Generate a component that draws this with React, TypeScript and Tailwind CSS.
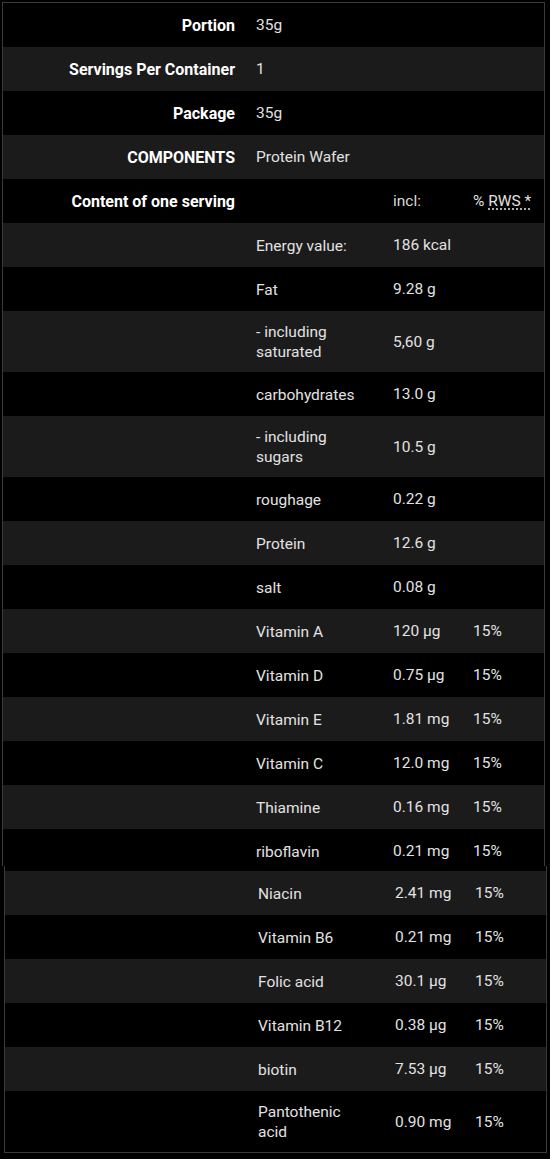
import React from 'react';

type Row = {
  name: string[];
  value: string;
  pct?: string;
  tall?: boolean;
};

const info = [
  { label: 'Portion', value: '35g' },
  { label: 'Servings Per Container', value: '1' },
  { label: 'Package', value: '35g' },
  { label: 'COMPONENTS', value: 'Protein Wafer' },
];

const upper: Row[] = [
  { name: ['Energy value:'], value: '186 kcal' },
  { name: ['Fat'], value: '9.28 g' },
  { name: ['- including', 'saturated'], value: '5,60 g', tall: true },
  { name: ['carbohydrates'], value: '13.0 g' },
  { name: ['- including', 'sugars'], value: '10.5 g', tall: true },
  { name: ['roughage'], value: '0.22 g' },
  { name: ['Protein'], value: '12.6 g' },
  { name: ['salt'], value: '0.08 g' },
  { name: ['Vitamin A'], value: '120 µg', pct: '15%' },
  { name: ['Vitamin D'], value: '0.75 µg', pct: '15%' },
  { name: ['Vitamin E'], value: '1.81 mg', pct: '15%' },
  { name: ['Vitamin C'], value: '12.0 mg', pct: '15%' },
  { name: ['Thiamine'], value: '0.16 mg', pct: '15%' },
  { name: ['riboflavin'], value: '0.21 mg', pct: '15%' },
];

const lower: Row[] = [
  { name: ['Niacin'], value: '2.41 mg', pct: '15%' },
  { name: ['Vitamin B6'], value: '0.21 mg', pct: '15%' },
  { name: ['Folic acid'], value: '30.1 µg', pct: '15%' },
  { name: ['Vitamin B12'], value: '0.38 µg', pct: '15%' },
  { name: ['biotin'], value: '7.53 µg', pct: '15%' },
  { name: ['Pantothenic', 'acid'], value: '0.90 mg', pct: '15%', tall: true },
];

const grid = 'grid grid-cols-[242px_137px_80px_1fr] items-center';

function NutrientRow({ row, gray }: { row: Row; gray: boolean }) {
  return (
    <div className={`${grid} ${row.tall ? 'h-[61px]' : 'h-[44px]'} ${gray ? 'bg-[#1b1b1b]' : 'bg-black'}`}>
      <div />
      <div className="px-[11px] pt-[1px] leading-[20px] text-[#e2e2e2]">
        {row.name.map((n, i) => (
          <div key={i}>{n}</div>
        ))}
      </div>
      <div className="px-[11px] pt-[2px] text-[#e2e2e2]">{row.value}</div>
      <div className="px-[11px] pt-[2px] text-[#e2e2e2]">{row.pct}</div>
    </div>
  );
}

export default function App() {
  return (
    <div
      className="min-h-[1159px] w-[550px] bg-black pt-[2px] text-[15.5px]"
      style={{ fontFamily: 'Roboto, "Liberation Sans", sans-serif' }}
    >
      {/* first part */}
      <div className="ml-[2px] h-[864px] w-[543px] overflow-hidden border border-b-0 border-[#3b3b3b]">
        {info.map((r, i) => (
          <div key={r.label} className={`${grid} h-[44px] pt-[2px] ${i % 2 ? 'bg-[#1b1b1b]' : 'bg-black'}`}>
            <div className="pr-[10px] text-right text-[16px] font-bold text-white">{r.label}</div>
            <div className="col-span-3 px-[11px] text-[#e2e2e2]">{r.value}</div>
          </div>
        ))}
        <div className={`${grid} h-[44px] pt-[2px] bg-black`}>
          <div className="pr-[10px] text-right text-[16px] font-bold text-white">Content of one serving</div>
          <div />
          <div className="px-[11px] text-[#d8d8d8]">incl:</div>
          <div className="px-[11px] text-[#e2e2e2]">
            % <span className="underline decoration-dotted underline-offset-2">RWS *</span>
          </div>
        </div>
        {upper.map((r, i) => (
          <NutrientRow key={i} row={r} gray={i % 2 === 0} />
        ))}
      </div>

      {/* second part */}
      <div className="ml-[4px] w-[543px] border border-t-0 border-[#3b3b3b]">
        <div className="h-[5px] bg-black" />
        {lower.map((r, i) => (
          <NutrientRow key={i} row={r} gray={i % 2 === 0} />
        ))}
      </div>
    </div>
  );
}
